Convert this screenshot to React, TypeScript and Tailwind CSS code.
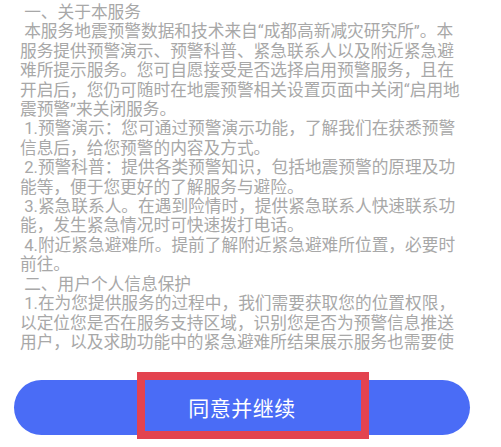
import React from "react";

const lines: string[] = [
  " 一、关于本服务",
  " 本服务地震预警数据和技术来自“成都高新减灾研究所”。本",
  "服务提供预警演示、预警科普、紧急联系人以及附近紧急避",
  "难所提示服务。您可自愿接受是否选择启用预警服务，且在",
  "开启后，您仍可随时在地震预警相关设置页面中关闭“启用地",
  "震预警”来关闭服务。",
  " 1.预警演示：您可通过预警演示功能，了解我们在获悉预警",
  "信息后，给您预警的内容及方式。",
  " 2.预警科普：提供各类预警知识，包括地震预警的原理及功",
  "能等，便于您更好的了解服务与避险。",
  " 3.紧急联系人。在遇到险情时，提供紧急联系人快速联系功",
  "能，发生紧急情况时可快速拨打电话。",
  " 4.附近紧急避难所。提前了解附近紧急避难所位置，必要时",
  "前往。",
  " 二、用户个人信息保护",
  " 1.在为您提供服务的过程中，我们需要获取您的位置权限，",
  "以定位您是否在服务支持区域，识别您是否为预警信息推送",
  "用户，以及求助功能中的紧急避难所结果展示服务也需要使",
];

export default function App() {
  return (
    <div className="w-[501px] h-[447px] bg-white overflow-hidden flex flex-col">
      <div className="pt-[3px] pl-[20px] text-[16.7px] leading-[19.4px] text-[#a8a8a8] font-['Roboto','Noto_Sans_CJK_SC',sans-serif]">
        {lines.map((l, i) => (
          <div key={i} className="whitespace-pre">
            {l}
          </div>
        ))}
      </div>
      <div className="mt-[28px] pl-[14px]">
        <div className="relative w-[456px] h-[55px] rounded-full bg-[#4a6cf6] flex items-center justify-center">
          <span className="text-white text-[21px] font-['Noto_Sans_CJK_SC',sans-serif] tracking-[0.5px]">
            同意并继续
          </span>
          <div className="absolute left-[123px] top-[-8px] w-[232px] h-[67px] border-[8px] border-[#e3434f]" />
        </div>
      </div>
    </div>
  );
}
